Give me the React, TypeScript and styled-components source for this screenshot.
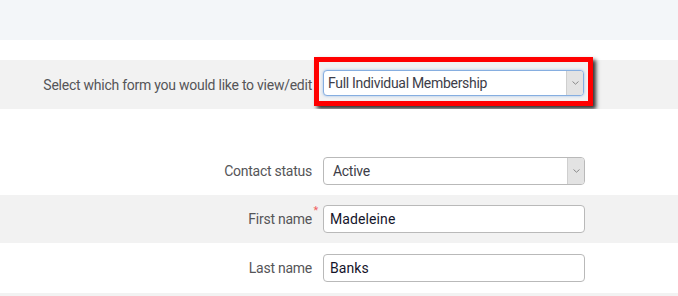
import React from "react";
import styled, { createGlobalStyle } from "styled-components";

const GlobalStyle = createGlobalStyle`
  html, body { margin: 0; padding: 0; background: #ffffff; }
  body { font-family: Roboto, "Liberation Sans", Arial, sans-serif; }
  * { box-sizing: border-box; }
`;

const Page = styled.div`
  width: 678px;
  height: 296px;
  overflow: hidden;
  display: flex;
  flex-direction: column;
`;

const TopBand = styled.div`
  height: 40px;
  flex-shrink: 0;
  background: #f3f6f9;
  margin-bottom: 20px;
`;

const Row = styled.div<{ $grey?: boolean; $h: number }>`
  height: ${(p) => p.$h}px;
  background: ${(p) => (p.$grey ? "#f2f2f2" : "#ffffff")};
  display: flex;
  align-items: center;
  flex-shrink: 0;
`;

const Label = styled.div<{ $required?: boolean }>`
  width: 313px;
  text-align: right;
  font-size: 14px;
  letter-spacing: -0.25px;
  color: #555558;
  position: relative;
  padding-right: 1px;
  &::after {
    content: ${(p) => (p.$required ? '"*"' : '""')};
    position: absolute;
    right: -5px;
    top: -7px;
    color: #f06060;
    font-size: 11px;
  }
`;

const Highlight = styled.div`
  margin-left: 1px;
  margin-top: -6px;
  border: 5px solid #ff0000;
  padding: 3px 4px 0 4px;
  height: 49px;
  width: 279px;
  box-shadow: 3px 3px 4px rgba(0, 0, 0, 0.8);
  display: flex;
  align-items: center;
`;

const SelectBox = styled.div<{ $focus?: boolean; $h: number }>`
  width: 262px;
  height: ${(p) => p.$h}px;
  border: 1px solid ${(p) => (p.$focus ? "#86aee0" : "#b9b9b9")};
  border-radius: 4px;
  background: #ffffff;
  box-shadow: ${(p) => (p.$focus ? "0 0 3px rgba(90, 150, 225, 0.55)" : "none")};
  display: flex;
  align-items: stretch;
  overflow: hidden;
`;

const SelectText = styled.div<{ $pad: number }>`
  flex: 1;
  display: flex;
  align-items: center;
  padding-left: ${(p) => p.$pad}px;
  font-size: 14px;
  letter-spacing: -0.3px;
  color: #3d3d48;
`;

const Arrow = styled.div`
  width: 17px;
  background: #e3e3e3;
  border-left: 1px solid #cfcfcf;
  display: flex;
  align-items: center;
  justify-content: center;
`;

const Control = styled.div`
  margin-left: 10px;
`;

const Input = styled.div`
  width: 262px;
  height: 28px;
  border: 1px solid #b9b9b9;
  border-radius: 4px;
  background: #ffffff;
  display: flex;
  align-items: center;
  padding-left: 6px;
  font-size: 14px;
  letter-spacing: 0.1px;
  color: #14142a;
`;

const Chevron = () => (
  <svg width="7" height="4" viewBox="0 0 7 4">
    <path d="M0.5 0.5 L3.5 3.2 L6.5 0.5" fill="none" stroke="#8a8a8a" strokeWidth="1" />
  </svg>
);

export default function App() {
  return (
    <Page>
      <GlobalStyle />
      <TopBand />
      <Row $grey $h={49}>
        <Label>Select which form you would like to view/edit</Label>
        <Highlight>
          <SelectBox $focus $h={26}>
            <SelectText $pad={4}>Full Individual Membership</SelectText>
            <Arrow>
              <Chevron />
            </Arrow>
          </SelectBox>
        </Highlight>
      </Row>
      <Row $h={37} />
      <Row $h={49}>
        <Label>Contact status</Label>
        <Control>
          <SelectBox $h={28}>
            <SelectText $pad={9}>Active</SelectText>
            <Arrow>
              <Chevron />
            </Arrow>
          </SelectBox>
        </Control>
      </Row>
      <Row $grey $h={48}>
        <Label $required>First name</Label>
        <Control>
          <Input>Madeleine</Input>
        </Control>
      </Row>
      <Row $h={50}>
        <Label>Last name</Label>
        <Control>
          <Input>Banks</Input>
        </Control>
      </Row>
      <Row $grey $h={10} />
    </Page>
  );
}
